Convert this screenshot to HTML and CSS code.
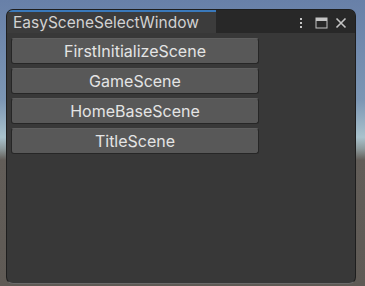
FILE: index.html
```html
<!DOCTYPE html>
<html lang="en">
<head>
    <meta charset="UTF-8">
    <title>EasySceneSelectWindow</title>
    <link rel="stylesheet" href="styles.css">
</head>
<body>
    <div class="editor-window">
        <header class="title-bar">
            <div class="tab">EasySceneSelectWindow</div>
            <div class="window-buttons">
                <svg class="icon menu-icon" width="8" height="12" viewBox="0 0 8 12">
                    <rect x="3" y="1" width="2" height="2" fill="#c4c4c4"/>
                    <rect x="3" y="5" width="2" height="2" fill="#c4c4c4"/>
                    <rect x="3" y="9" width="2" height="2" fill="#c4c4c4"/>
                </svg>
                <svg class="icon" width="13" height="12" viewBox="0 0 13 12">
                    <rect x="1" y="1" width="11" height="10" fill="none" stroke="#c4c4c4" stroke-width="1"/>
                    <rect x="1" y="1" width="11" height="3" fill="#c4c4c4"/>
                </svg>
                <svg class="icon" width="12" height="12" viewBox="0 0 12 12">
                    <path d="M1.5 1.5 L10.5 10.5 M10.5 1.5 L1.5 10.5" stroke="#c4c4c4" stroke-width="1.6"/>
                </svg>
            </div>
        </header>
        <main class="content">
            <button class="scene-button">FirstInitializeScene</button>
            <button class="scene-button">GameScene</button>
            <button class="scene-button">HomeBaseScene</button>
            <button class="scene-button">TitleScene</button>
        </main>
    </div>
</body>
</html>
```

FILE: styles.css
```css
body {
    margin: 0;
    padding: 9px 9px 4px 6px;
    width: 365px;
    height: 286px;
    box-sizing: border-box;
    overflow: hidden;
    font-family: Inter, "Noto Sans", sans-serif;
    background: linear-gradient(to bottom, #6880a8 0%, #7c96b4 35%, #a9c2cc 48%, #8d9a9c 52%, #625d58 56%, #5f5a55 100%);
}
.editor-window {
    height: 273px;
    display: flex;
    flex-direction: column;
    background-color: #383838;
    border: 1px solid #1e1e1e;
    border-bottom-color: #6a6a6a;
    border-radius: 7px;
    overflow: hidden;
}
.title-bar {
    display: flex;
    justify-content: space-between;
    align-items: stretch;
    height: 23px;
    background-color: #282828;
}
.tab {
    width: 209px;
    padding: 1px 0 0 6px;
    box-sizing: border-box;
    background-color: #3c3c3c;
    border-top: 2px solid #3a79bb;
    color: #d2d2d2;
    font-size: 15.5px;
    line-height: 20px;
    white-space: nowrap;
}
.window-buttons {
    display: flex;
    align-items: center;
    gap: 7px;
    padding: 2px 8px 0 0;
}
.icon {
    display: block;
}
.menu-icon {
    margin-right: 3px;
}
.content {
    flex-grow: 1;
    display: flex;
    flex-direction: column;
    align-items: flex-start;
    gap: 4px;
    padding: 5px 0 0 4px;
}
.scene-button {
    width: 248px;
    height: 26px;
    padding: 0;
    background-color: #585858;
    border: 1px solid #262626;
    border-top-color: #5f5f5f;
    border-radius: 3px;
    color: #e4e4e4;
    font-family: Inter, "Noto Sans", sans-serif;
    font-size: 16px;
}
```
